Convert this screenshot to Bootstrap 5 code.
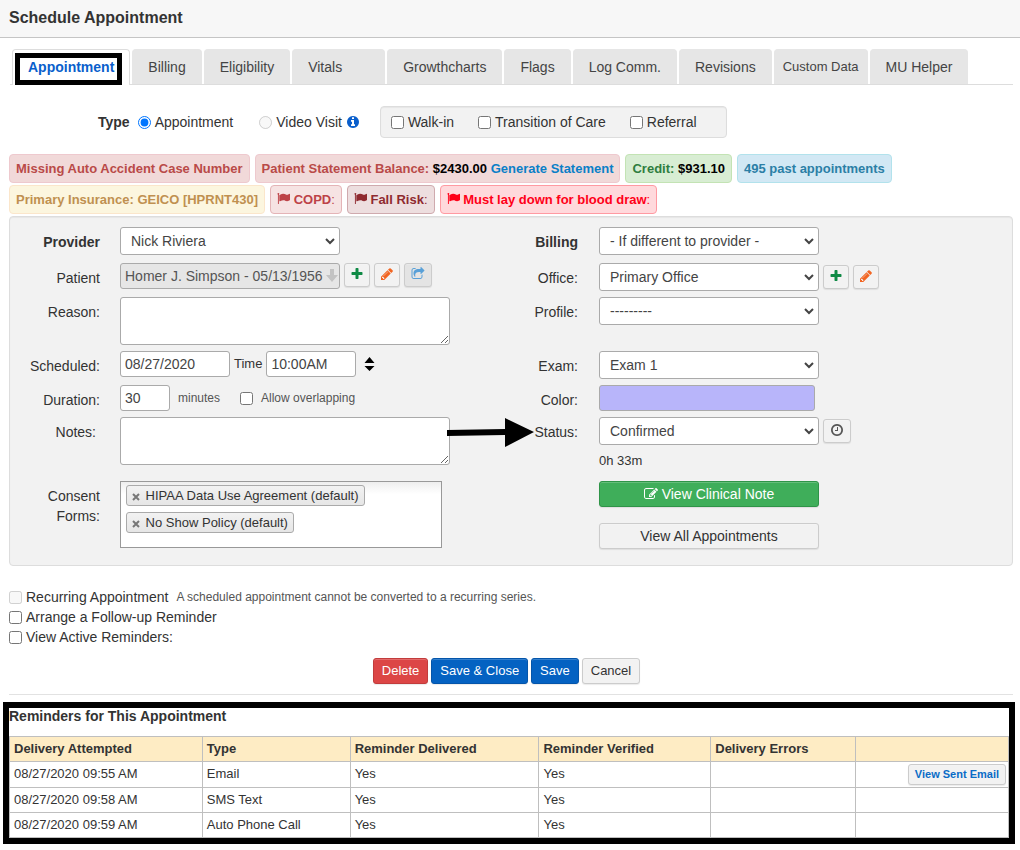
<!DOCTYPE html>
<html lang="en">
<head>
<meta charset="utf-8">
<meta name="viewport" content="width=device-width, initial-scale=1">
<title>Schedule Appointment</title>
<link href="https://cdn.jsdelivr.net/npm/bootstrap@5.3.0/dist/css/bootstrap.min.css" rel="stylesheet">
<style>
  body { font-family: "Liberation Sans", Arial, sans-serif; font-size: 14px; line-height: 20px; color: #333; background: #fff; }
  .page-head { background: #f7f7f7; border-bottom: 1px solid #c5c5c5; padding: 7px 9px 8px; }
  .page-head h1 { font-size: 16px; line-height: 22px; font-weight: 700; margin: 0; }
  .page-main { padding: 11px 7px 0 9px; }
  svg.ico { width: 14px; height: 14px; fill: currentColor; vertical-align: -2px; }

  .tab-bar { display: flex; gap: 2px; margin: 0 0 0 1px; padding-left: 2px; border-bottom: 1px solid #ddd; }
  .tab-bar .nav-link { background: #e6e6e6; border: 1px solid #e6e6e6; border-bottom: 0; border-radius: 4px 4px 0 0; color: #444; padding: 7px 15px; line-height: 20px; white-space: nowrap; }
  .tab-bar .nav-link.active { background: #fff; border-color: #ddd; color: #0a5fcc; font-weight: 700; position: relative; margin-bottom: -1px; }
  .tab-bar .nav-link.wide { padding-right: 42px; }
  .tab-bar .nav-link.compact { font-size: 13px; padding-left: 8px; padding-right: 8px; }
  .tab-frame { position: absolute; left: 2px; right: 7px; top: 3px; bottom: 0; border: 5px solid #000; pointer-events: none; }

  .type-line { padding: 21px 0 16px 89px; }
  input[type=checkbox], input[type=radio] { width: 13px; height: 13px; margin: 0; flex: none; }
  .tick { display: flex; align-items: center; gap: 4px; }
  .tick-kind { margin-right: 26px; }
  .well-box { background: #f2f2f2; border: 1px solid #ddd; border-radius: 4px; box-shadow: inset 0 1px 1px rgba(0,0,0,.05); }
  .type-well { padding: 5px 29px 5px 10px; margin-left: 20px; gap: 24px; }

  .notes-bar { gap: 2px 5px; margin-bottom: 2px; }
  .note { font-size: 13px; font-weight: 700; line-height: 17px; padding: 5px 6px; border: 1px solid; border-radius: 4px; white-space: nowrap; }
  .note a { color: #0a7fc7; text-decoration: none; }
  .note b { color: #000; }
  .note svg.ico { width: 13px; height: 13px; vertical-align: -1px; }
  .note-red { background: #f1d9d9; border-color: #eec9ce; color: #b94a48; }
  .note-green { background: #d8edd3; border-color: #c3e3b4; color: #2f7d3f; }
  .note-blue { background: #d2e8f4; border-color: #b2e2ec; color: #2b7fa6; }
  .note-gold { background: #fcf6df; border-color: #fbe6cb; color: #c09050; }
  .note-copd { background: #f6e3e3; border-color: #e4b4b7; color: #bd4247; }
  .note-fall { background: #eddedf; border-color: #cfaaae; color: #8f2a30; }
  .note-alert { background: #ffd9dc; border-color: #ff9aa2; color: #ff0018; }

  .form-side { display: grid; column-gap: 20px; align-items: start; align-content: start; grid-template-rows: minmax(36px,auto) minmax(34px,auto) minmax(54px,auto) minmax(34px,auto) minmax(32px,auto) minmax(64px,auto) auto; }
  .side-a { grid-template-columns: 90px minmax(0,1fr); }
  .side-b { grid-template-columns: 67px minmax(0,1fr); column-gap: 21px; }
  .form-side .cap { text-align: right; padding-top: 5px; }
  .panel-form { padding: 10px 0 16px; }
  .form-control, .form-select { font-size: 14px; line-height: 20px; color: #444; border: 1px solid #aaa; border-radius: 3px; }
  .form-control { padding: 2px 4px; height: 26px; }
  .form-control:disabled { background: #e6e6e6; color: #555; }
  .form-select { width: 220px; height: 28px; padding: 3px 20px 3px 10px; background-size: 12px 12px; background-position: right 3px center;
    background-image: url("data:image/svg+xml,%3csvg xmlns='http://www.w3.org/2000/svg' viewBox='0 0 12 12'%3e%3cpath fill='none' stroke='%23444' stroke-width='2' d='M2 4l4 4 4-4'/%3e%3c/svg%3e"); }
  textarea.form-control { width: 330px; height: 48px; min-height: 48px; }
  .w-110 { width: 110px; } .w-90 { width: 90px; } .w-50x { width: 50px; }
  .hint { font-size: 12px; color: #555; }
  .text-13 { font-size: 13px; line-height: 16px; }
  .swatch { width: 216px; background: #b8b5fa; border-color: #aaa; }
  .patient-field { position: relative; width: 220px; }
  .patient-field svg { position: absolute; right: 2px; top: 6px; width: 12px; height: 14px; fill: #c3c3c3; }

  .btn { --bs-btn-font-size: 13px; --bs-btn-border-radius: 3px; line-height: 18px; padding: 3px 8px; box-shadow: inset 0 1px 0 rgba(255,255,255,.2), 0 1px 1px rgba(0,0,0,.08); }
  .btn-icon { padding: 1px 5px; height: 24px; line-height: 18px; }
  .btn-icon.roomy { padding-left: 6px; padding-right: 6px; color: #555; }
  .btn-plain { --bs-btn-bg: #f2f2f2; --bs-btn-border-color: #ccc; --bs-btn-color: #333; }
  .btn-plain:disabled { background: #e4e4e4; opacity: 1; border-color: #ccc; }
  .btn-go { --bs-btn-bg: #3fae5a; --bs-btn-border-color: #2f9448; --bs-btn-color: #fff; }
  .btn-save { --bs-btn-bg: #0462c2; --bs-btn-border-color: #0455aa; --bs-btn-color: #fff; }
  .btn-del { --bs-btn-bg: #dc4646; --bs-btn-border-color: #c23c3c; --bs-btn-color: #fff; }
  .btn-long { width: 220px; --bs-btn-font-size: 14px; }
  .green { color: #0f8a45; } .orange { color: #f26522; } .sky { color: #58a0d8; } .info { color: #0a5fcc; }

  .spin-arrows { width: 11px; height: 16px; fill: #000; }
  .chips { width: 322px; min-height: 67px; background: #fff linear-gradient(#eee 0, #fff 12px); border: 1px solid #999; padding: 3px 5px; }
  .chip { display: table; background: linear-gradient(#f2f2f2, #e6e6e6); border: 1px solid #aaa; border-radius: 3px; font-size: 13px; line-height: 19px; padding: 0 5px; margin-bottom: 6px; }
  .chip button { border: 0; background: none; padding: 0; margin-right: 2px; line-height: 1; }
  .chip svg { width: 8px; height: 8px; stroke: #777; stroke-width: 2; }
  .status-cap { position: relative; }
  .status-cap svg { position: absolute; right: 43px; top: 0; width: 88px; height: 32px; }

  .after-list { display: grid; margin-top: 21px; }
  .actions { gap: 3px; margin: 11px 9px 0 0; }
  hr { border-color: #d5d5d5; opacity: .7; margin: 10px 0 7px; }
  .reminders { border: 6px solid #000; margin: 0 -2px 0 -6px; }
  .reminders h2 { font-size: 14px; line-height: 16px; font-weight: 700; margin: 0 0 12px; }
  .reminders table { --bs-table-color: #333; --bs-table-bg: transparent; font-size: 13px; line-height: 17px; margin: 0; table-layout: fixed; color: #333; border-color: #bfbfbf; }
  .reminders th, .reminders td { padding: 3px 4px 4px; }
  .reminders thead th { background: #feecc4; }
  .reminders .act { padding: 2px; text-align: right; }
  .btn-mini { --bs-btn-font-size: 11px; --bs-btn-color: #0a6cc7; font-weight: 700; line-height: 14px; padding: 2px 6px 3px; display: block; margin-left: auto; }
</style>
</head>
<body>
<svg class="d-none" aria-hidden="true">
  <symbol id="i-flag" viewBox="0 0 1792 1792"><path d="M320 256q0 72-64 110v1266q0 13-9.500 22.500t-22.500 9.500h-64q-13 0-22.500-9.500t-9.500-22.500v-1266q-64-38-64-110 0-53 37.500-90.500t90.500-37.500 90.500 37.500 37.500 90.500zm1472 64v763q0 25-12.500 38.500t-39.500 27.500q-215 116-369 116-61 0-123.500-22t-108.500-48-115.500-48-142.500-22q-192 0-464 146-17 9-33 9-26 0-45-19t-19-45v-742q0-32 31-55 21-14 79-43 236-120 421-120 107 0 200 29t219 88q38 19 88 19 54 0 117.500-21t110-47 88-47 54.500-21q26 0 45 19t19 45z"/></symbol>
  <symbol id="i-plus" viewBox="0 0 1792 1792"><path d="M1600 736v192q0 40-28 68t-68 28h-416v416q0 40-28 68t-68 28h-192q-40 0-68-28t-28-68v-416h-416q-40 0-68-28t-28-68v-192q0-40 28-68t68-28h416v-416q0-40 28-68t68-28h192q40 0 68 28t28 68v416h416q40 0 68 28t28 68z"/></symbol>
  <symbol id="i-pencil" viewBox="0 0 1792 1792"><path d="M491 1536l91-91-235-235-91 91v107h128v128h107zm523-928q0-22-22-22-10 0-17 7l-542 542q-7 7-7 17 0 22 22 22 10 0 17-7l542-542q7-7 7-17zm-54-192l416 416-832 832h-416v-416zm683 96q0 53-37 90l-166 166-416-416 166-165q36-38 90-38 53 0 91 38l235 234q37 39 37 91z"/></symbol>
  <symbol id="i-edit" viewBox="0 0 1792 1792"><path d="M888 1184l116-116-152-152-116 116v56h96v96h56zm440-720q-16-16-33 1l-350 350q-17 17-1 33t33-1l350-350q17-17 1-33zm80 594v190q0 119-84.500 203.500t-203.500 84.500h-832q-119 0-203.500-84.500t-84.500-203.500v-832q0-119 84.500-203.500t203.500-84.500h832q63 0 117 25 15 7 18 23 3 17-9 29l-49 49q-14 14-32 8-23-6-45-6h-832q-66 0-113 47t-47 113v832q0 66 47 113t113 47h832q66 0 113-47t47-113v-126q0-13 9-22l64-64q15-15 35-7t20 29zm-96-738l288 288-672 672h-288v-288zm444 132l-92 92-288-288 92-92q28-28 68-28t68 28l152 152q28 28 28 68t-28 68z"/></symbol>
  <symbol id="i-share" viewBox="0 0 1792 1792"><path d="M1472 989v259q0 119-84.500 203.500t-203.500 84.500h-832q-119 0-203.500-84.500t-84.500-203.500v-832q0-119 84.500-203.500t203.500-84.500h255q13 0 22.500 9.500t9.500 22.500q0 27-26 32-77 26-133 60-10 4-16 4h-112q-66 0-113 47t-47 113v832q0 66 47 113t113 47h832q66 0 113-47t47-113v-214q0-19 18-29 28-13 54-37 16-16 35-8 21 9 21 29zm237-496l-384 384q-18 19-45 19-12 0-25-5-39-17-39-59v-192h-160q-323 0-438 131-119 137-74 473 3 23-20 34-8 2-12 2-16 0-26-13-10-14-21-31t-39.500-68.500-49.500-99.500-38.500-114-17.500-122q0-49 3.500-91t14-90 28-88 47-81.500 68.500-74 94.500-61.500 124.500-48.500 159.500-30.500 196.500-11h160v-192q0-42 39-59 13-5 25-5 26 0 45 19l384 384q19 19 19 45t-19 45z"/></symbol>
  <symbol id="i-clock" viewBox="0 0 1792 1792"><path d="M1024 544v448q0 14-9 23t-23 9h-320q-14 0-23-9t-9-23v-64q0-14 9-23t23-9h224v-352q0-14 9-23t23-9h64q14 0 23 9t9 23zm416 352q0-148-73-273t-198-198-273-73-273 73-198 198-73 273 73 273 198 198 273 73 273-73 198-198 73-273zm224 0q0 209-103 385.500t-279.500 279.500-385.500 103-385.500-103-279.500-279.500-103-385.500 103-385.500 279.500-279.500 385.500-103 385.500 103 279.500 279.500 103 385.500z"/></symbol>
  <symbol id="i-info" viewBox="0 0 1792 1792"><path d="M1152 1376v-160q0-14-9-23t-23-9h-96v-512q0-14-9-23t-23-9h-320q-14 0-23 9t-9 23v160q0 14 9 23t23 9h96v320h-96q-14 0-23 9t-9 23v160q0 14 9 23t23 9h448q14 0 23-9t9-23zm-128-896v-160q0-14-9-23t-23-9h-192q-14 0-23 9t-9 23v160q0 14 9 23t23 9h192q14 0 23-9t9-23zm640 416q0 209-103 385.500t-279.500 279.500-385.500 103-385.500-103-279.500-279.500-103-385.500 103-385.500 279.500-279.500 385.500-103 385.500 103 279.500 279.500 103 385.500z"/></symbol>
</svg>

<header class="page-head"><h1>Schedule Appointment</h1></header>

<main class="page-main">
  <nav class="tab-bar" aria-label="Sections">
    <a class="nav-link active" href="#appointment" aria-current="page">Appointment<span class="tab-frame"></span></a>
    <a class="nav-link" href="#billing">Billing</a>
    <a class="nav-link" href="#eligibility">Eligibility</a>
    <a class="nav-link wide" href="#vitals">Vitals</a>
    <a class="nav-link" href="#growthcharts">Growthcharts</a>
    <a class="nav-link" href="#flags">Flags</a>
    <a class="nav-link" href="#log">Log Comm.</a>
    <a class="nav-link" href="#revisions">Revisions</a>
    <a class="nav-link compact" href="#custom">Custom Data</a>
    <a class="nav-link" href="#mu">MU Helper</a>
  </nav>

  <form id="appointment">
    <div class="type-line d-flex align-items-center">
      <strong class="me-2">Type</strong>
      <label class="tick tick-kind"><input type="radio" name="kind" checked>Appointment</label>
      <label class="tick"><input type="radio" name="kind" disabled>Video Visit <svg class="ico info"><use href="#i-info"/></svg></label>
      <div class="type-well well-box d-flex">
        <label class="tick"><input type="checkbox">Walk-in</label>
        <label class="tick"><input type="checkbox">Transition of Care</label>
        <label class="tick"><input type="checkbox">Referral</label>
      </div>
    </div>

    <div class="notes-bar d-flex flex-wrap">
      <span class="note note-red">Missing Auto Accident Case Number</span>
      <span class="note note-red">Patient Statement Balance: <b>$2430.00</b> <a href="#statement">Generate Statement</a></span>
      <span class="note note-green">Credit: <b>$931.10</b></span>
      <span class="note note-blue">495 past appointments</span>
    </div>
    <div class="notes-bar d-flex flex-wrap">
      <span class="note note-gold">Primary Insurance: GEICO [HPRNT430]</span>
      <span class="note note-copd"><svg class="ico"><use href="#i-flag"/></svg> COPD<span class="fw-normal">:</span></span>
      <span class="note note-fall"><svg class="ico"><use href="#i-flag"/></svg> Fall Risk<span class="fw-normal">:</span></span>
      <span class="note note-alert"><svg class="ico"><use href="#i-flag"/></svg> Must lay down for blood draw<span class="fw-normal">:</span></span>
    </div>

    <section class="well-box panel-form">
      <div class="row g-0">
        <div class="col-6 form-side side-a">
          <label class="cap fw-bold" for="provider">Provider</label>
          <div><select class="form-select" id="provider"><option>Nick Riviera</option></select></div>

          <label class="cap" for="patient">Patient</label>
          <div class="d-flex gap-1">
            <div class="patient-field"><input class="form-control" id="patient" value="Homer J. Simpson - 05/13/1956" disabled>
              <svg viewBox="0 0 12 14"><path d="M4 0h4v6h4l-6 7-6-7h4z"/></svg></div>
            <button type="button" class="btn btn-plain btn-icon" aria-label="Add patient"><svg class="ico green"><use href="#i-plus"/></svg></button>
            <button type="button" class="btn btn-plain btn-icon" aria-label="Edit patient"><svg class="ico orange"><use href="#i-pencil"/></svg></button>
            <button type="button" class="btn btn-plain btn-icon roomy" aria-label="Open patient" disabled><svg class="ico sky"><use href="#i-share"/></svg></button>
          </div>

          <label class="cap" for="reason">Reason:</label>
          <div><textarea class="form-control" id="reason"></textarea></div>

          <label class="cap" for="date">Scheduled:</label>
          <div class="d-flex gap-1 align-items-center">
            <input class="form-control w-110" id="date" value="08/27/2020">
            <label class="text-13" for="time">Time</label>
            <input class="form-control w-90" id="time" value="10:00AM">
            <svg class="spin-arrows ms-1" viewBox="0 0 11 16"><path d="M5.500 1l5 6h-10zM5.500 15l5-5h-10z"/></svg>
          </div>

          <label class="cap" for="duration">Duration:</label>
          <div class="d-flex align-items-center">
            <input class="form-control w-50x me-2" id="duration" value="30">
            <span class="hint">minutes</span>
            <label class="tick hint gap-2 ms-3"><input type="checkbox" class="ms-1">Allow overlapping</label>
          </div>

          <label class="cap pe-1" for="notes">Notes:</label>
          <div><textarea class="form-control" id="notes"></textarea></div>

          <span class="cap">Consent Forms:</span>
          <div class="chips">
            <span class="chip"><button type="button" aria-label="Remove HIPAA"><svg viewBox="0 0 8 8"><path d="M1 1l6 6M7 1l-6 6"/></svg></button> HIPAA Data Use Agreement (default)</span>
            <span class="chip"><button type="button" aria-label="Remove No Show"><svg viewBox="0 0 8 8"><path d="M1 1l6 6M7 1l-6 6"/></svg></button> No Show Policy (default)</span>
          </div>
        </div>

        <div class="col-6 form-side side-b">
          <label class="cap fw-bold" for="bill">Billing</label>
          <div><select class="form-select" id="bill"><option>- If different to provider -</option></select></div>

          <label class="cap" for="office">Office:</label>
          <div class="d-flex gap-1 align-items-center">
            <select class="form-select" id="office"><option>Primary Office</option></select>
            <button type="button" class="btn btn-plain btn-icon" aria-label="Add office"><svg class="ico green"><use href="#i-plus"/></svg></button>
            <button type="button" class="btn btn-plain btn-icon" aria-label="Edit office"><svg class="ico orange"><use href="#i-pencil"/></svg></button>
          </div>

          <label class="cap" for="profile">Profile:</label>
          <div><select class="form-select" id="profile"><option>---------</option></select></div>

          <label class="cap" for="exam">Exam:</label>
          <div><select class="form-select" id="exam"><option>Exam 1</option></select></div>

          <label class="cap" for="color">Color:</label>
          <div><input class="form-control swatch" id="color" readonly></div>

          <label class="cap status-cap" for="status">Status:<svg viewBox="0 0 88 32"><path d="M0 13l58-1V1l29 14-29 15V18l-58 1z"/></svg></label>
          <div>
            <div class="d-flex gap-1 align-items-center">
              <select class="form-select" id="status"><option>Confirmed</option></select>
              <button type="button" class="btn btn-plain btn-icon roomy" aria-label="Status history"><svg class="ico"><use href="#i-clock"/></svg></button>
            </div>
            <div class="pt-2 text-13">0h 33m</div>
          </div>

          <span></span>
          <div class="d-grid gap-3 justify-content-start">
            <button type="button" class="btn btn-go btn-long"><svg class="ico"><use href="#i-edit"/></svg> View Clinical Note</button>
            <button type="button" class="btn btn-plain btn-long">View All Appointments</button>
          </div>
        </div>
      </div>
    </section>

    <div class="after-list">
      <label class="tick"><input type="checkbox" disabled>Recurring Appointment <span class="hint ms-1">A scheduled appointment cannot be converted to a recurring series.</span></label>
      <label class="tick"><input type="checkbox">Arrange a Follow-up Reminder</label>
      <label class="tick"><input type="checkbox">View Active Reminders:</label>
    </div>

    <div class="actions d-flex justify-content-center">
      <button type="button" class="btn btn-del">Delete</button>
      <button type="button" class="btn btn-save">Save &amp; Close</button>
      <button type="button" class="btn btn-save">Save</button>
      <button type="button" class="btn btn-plain">Cancel</button>
    </div>
  </form>
  <hr>

  <section class="reminders">
    <h2>Reminders for This Appointment</h2>
    <table class="table table-bordered">
      <colgroup><col style="width:19.3%"><col style="width:14.8%"><col style="width:18.9%"><col style="width:17.2%"><col style="width:14.5%"><col></colgroup>
      <thead><tr><th>Delivery Attempted</th><th>Type</th><th>Reminder Delivered</th><th>Reminder Verified</th><th>Delivery Errors</th><th></th></tr></thead>
      <tbody>
        <tr><td>08/27/2020 09:55 AM</td><td>Email</td><td>Yes</td><td>Yes</td><td></td><td class="act"><button type="button" class="btn btn-plain btn-mini">View Sent Email</button></td></tr>
        <tr><td>08/27/2020 09:58 AM</td><td>SMS Text</td><td>Yes</td><td>Yes</td><td></td><td></td></tr>
        <tr><td>08/27/2020 09:59 AM</td><td>Auto Phone Call</td><td>Yes</td><td>Yes</td><td></td><td></td></tr>
      </tbody>
    </table>
  </section>
</main>
<script src="https://cdn.jsdelivr.net/npm/bootstrap@5.3.0/dist/js/bootstrap.bundle.min.js"></script>
</body>
</html>
